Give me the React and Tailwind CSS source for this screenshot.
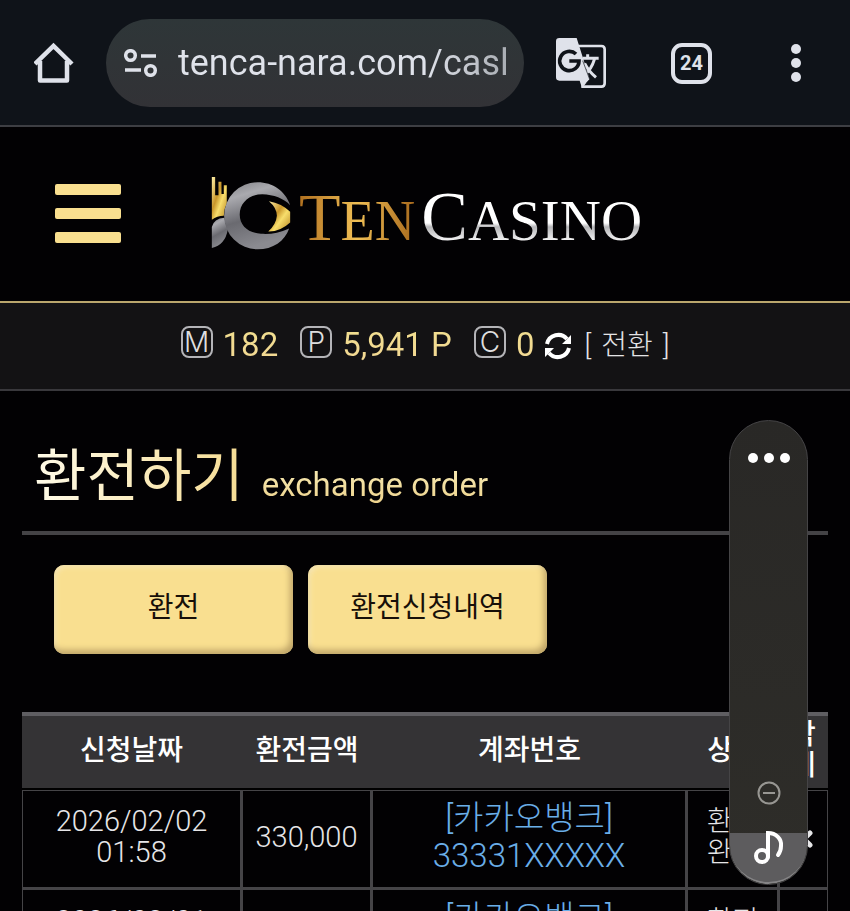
import React from 'react';

const BALANCES = [
  { key: 'M', value: '182' },
  { key: 'P', value: '5,941 P' },
  { key: 'C', value: '0' },
];

const ORDERS = [
  { date: '2026/02/02', time: '01:58', amount: '330,000', bank: '[카카오뱅크]', account: '33331XXXXX', status: ['환전', '완료'] },
  { date: '2026/02/01', time: '01:58', amount: '330,000', bank: '[카카오뱅크]', account: '33331XXXXX', status: ['환전', '완료'] },
];

function HomeIcon() {
  return (
    <svg viewBox="0 0 40 42" className="h-[42px] w-10" fill="none" stroke="#dfe2ea" strokeWidth="4.500" strokeLinejoin="round">
      <path d="M1 22 L19.500 4 L38 22" strokeLinejoin="miter" />
      <path d="M6 19 V38.500 H33 V19" />
    </svg>
  );
}

function TuneIcon() {
  return (
    <svg viewBox="0 0 34 28" className="h-7 w-[34px] shrink-0" fill="none" stroke="#dfe2ea" strokeWidth="3.500">
      <circle cx="6.500" cy="6.500" r="4.800" />
      <path d="M17 7 H32 M1 21 H17" />
      <circle cx="26.500" cy="21.500" r="4.800" />
    </svg>
  );
}

function TranslateIcon() {
  return (
    <svg viewBox="0 0 150 150" className="h-[50px] w-[50px]" fill="none">
      <path d="M66 24 H136 Q146 24 146 34 V136 Q146 146 136 146 H76" stroke="#dfe2ea" strokeWidth="8" />
      <path d="M10 0 H62 L101 124 L78 150 L71 128 H10 Q0 128 0 118 V10 Q0 0 10 0Z" fill="#dfe2ea" />
      <path d="M60 48 A29 29 0 1 0 69 69 H40" stroke="#0f1319" strokeWidth="11" />
      <path d="M80 61 H128 M95 49 V61 M116 62 Q106 96 84 112 M86 76 Q98 100 120 118" stroke="#dfe2ea" strokeWidth="9" />
      <path d="M80 68 L101 124 L90 136" stroke="#0f1319" strokeWidth="2" />
    </svg>
  );
}

function LogoMark() {
  return (
    <svg viewBox="66 50 240 226" className="h-[75px] w-20" aria-hidden="true">
      <defs>
        <linearGradient id="markGold" x1="0" y1="0" x2="1" y2="1">
          <stop offset="0" stopColor="#fff0a8" />
          <stop offset="0.4" stopColor="#c9962a" />
          <stop offset="0.6" stopColor="#f8de6c" />
          <stop offset="1" stopColor="#b58420" />
        </linearGradient>
        <linearGradient id="markSteel" x1="0" y1="0" x2="0.3" y2="1">
          <stop offset="0" stopColor="#7f7f84" />
          <stop offset="0.25" stopColor="#aaaaaf" />
          <stop offset="0.6" stopColor="#6a6a70" />
          <stop offset="1" stopColor="#8a8a90" />
        </linearGradient>
      </defs>
      <path d="M68 53 H78 V108 H88 V67 H97 V104 H104 V78 H113 V132 Q104 150 104 170 Q84 170 68 182Z" fill="url(#markGold)" />
      <path d="M68 204 Q74 178 106 176 Q107 192 116 212 Q108 258 68 267Z" fill="url(#markSteel)" />
      <path
        d="M304 138 C290 96 252 69 206 69 A101 101 0 1 0 206 271 C252 271 288 246 301 208 C270 222 244 226 216 224 C178 222 152 200 152 166 C152 130 182 105 220 105 C254 106 286 118 304 138Z"
        fill="url(#markSteel)"
      />
      <path d="M240 126 Q278 132 304 158 V190 Q274 218 238 217 Q262 196 264 170 Q264 146 240 126Z" fill="url(#markGold)" />
    </svg>
  );
}

function BrowserBar() {
  return (
    <div className="flex items-center border-b-2 border-[#3d3e43] bg-[#0f1319] pt-[19px] pr-[49px] pb-[18px] pl-[34px]">
      <button type="button" aria-label="Home" className="mr-8">
        <HomeIcon />
      </button>
      <div className="flex h-[88px] min-w-0 flex-1 items-center gap-5 rounded-full bg-linear-to-b from-[#2e3638] to-[#323236] pr-4 pl-[18px]">
        <TuneIcon />
        <label className="min-w-0 flex-1 overflow-hidden">
          <input
            type="text"
            aria-label="Address"
            defaultValue="tenca-nara.com/casl"
            className="w-full bg-linear-to-r from-[#dfe2ea] from-75% to-[#a9adb3] bg-clip-text text-[36px] leading-[48px] text-transparent outline-none"
          />
        </label>
      </div>
      <button type="button" aria-label="Translate" className="ml-8">
        <TranslateIcon />
      </button>
      <button
        type="button"
        aria-label="Tabs"
        className="ml-[65px] flex h-[41px] w-[41px] items-center justify-center rounded-[11px] border-4 border-[#dfe2ea] text-xl font-bold text-[#dfe2ea]"
      >
        24
      </button>
      <button type="button" aria-label="Menu" className="ml-[79px] flex flex-col gap-1">
        <span className="h-[10px] w-[10px] rounded-full bg-[#dfe2ea]" />
        <span className="h-[10px] w-[10px] rounded-full bg-[#dfe2ea]" />
        <span className="h-[10px] w-[10px] rounded-full bg-[#dfe2ea]" />
      </button>
    </div>
  );
}

function SiteHeader() {
  return (
    <header className="flex h-[176px] items-center gap-[90px] border-b-2 border-[#b9a66c] pb-[2px] pl-[55px]">
      <button type="button" aria-label="메뉴" className="flex w-[66px] flex-col gap-[13px]">
        <span className="h-[11px] w-full rounded-xs bg-[#f9df8f]" />
        <span className="h-[11px] w-full rounded-xs bg-[#f9df8f]" />
        <span className="h-[11px] w-full rounded-xs bg-[#f9df8f]" />
      </button>
      <a href="#" className="flex items-center gap-2 whitespace-nowrap font-['Liberation_Serif',serif] text-[56px] leading-[76px]">
        <LogoMark />
        <span className="flex items-baseline gap-[6px] pt-3">
          <span className="bg-linear-to-r from-[#b0701f] via-[#f0bf55] to-[#a86a1c] bg-clip-text text-transparent">
            <span className="text-[68px]">T</span>EN
          </span>
          <span className="bg-linear-to-b from-white from-55% via-[#b5b5b8] via-60% to-white to-80% bg-clip-text text-[57px] text-transparent">
            <span className="text-[70px]">C</span>ASINO
          </span>
        </span>
      </a>
    </header>
  );
}

function BalanceBar() {
  return (
    <div className="flex h-[88px] items-center justify-center border-b-2 border-[#39383c] bg-[#131214] pb-2 whitespace-nowrap">
      {BALANCES.map((b) => (
        <div key={b.key} className="mr-[22px] flex items-center gap-[10px] last-of-type:mr-[10px]">
          <span className="flex h-8 w-8 items-center justify-center rounded-lg border-2 border-[#b4b4b8] font-['Inter',sans-serif] text-[28px] leading-none font-light text-[#dededf]">
            {b.key}
          </span>
          <span className="bg-linear-to-b from-[#f0e08e] to-[#f3d794] bg-clip-text pt-[6px] text-[33px] leading-10 text-transparent">{b.value}</span>
        </div>
      ))}
      <button type="button" className="flex items-center gap-3 pt-2 text-[28px] leading-10 font-light text-[#e4e4e6]">
        <svg viewBox="0 0 28 28" className="h-7 w-7" fill="none" stroke="#fff" strokeWidth="4">
          <path d="M3 12 A11.500 11.500 0 0 1 23 7 M25 16 A11.500 11.500 0 0 1 5 21" />
          <path d="M27 3 V12 H18Z M1 25 V16 H10Z" fill="#fff" stroke="none" />
        </svg>
        <span className="flex gap-[10px]">
          <span>[</span>
          <span>전환</span>
          <span>]</span>
        </span>
      </button>
    </div>
  );
}

function OrderTable() {
  return (
    <table className="w-full table-fixed border-separate border-spacing-0 text-center text-[29px] leading-[31px] text-[#e6e6e8]">
      <colgroup>
        <col className="w-[221px]" />
        <col className="w-[130px]" />
        <col />
        <col className="w-[92px]" />
        <col className="w-[48px]" />
      </colgroup>
      <thead>
        <tr className="h-[78px] text-[28px] text-white [&>th]:border-t-4 [&>th]:border-b-2 [&>th]:border-t-[#5f5e62] [&>th]:border-b-black [&>th]:bg-[#343335] [&>th]:pr-[2px] [&>th]:pb-1 [&>th]:font-medium">
          <th>신청날짜</th>
          <th>환전금액</th>
          <th>계좌번호</th>
          <th>상태</th>
          <th>삭<br />제</th>
        </tr>
      </thead>
      <tbody className="[&_td]:border-r-[3px] [&_td]:border-b-[3px] [&_td]:border-[#454447] [&_td]:pb-1 [&_td:first-child]:border-l [&_td:last-child]:border-r [&>tr:first-child>td]:border-t">
        {ORDERS.map((o, i) => (
          <tr key={i} className="h-[100px] font-light">
            <td>{o.date}<br />{o.time}</td>
            <td>{o.amount}</td>
            <td className="text-[33px] leading-[38px] text-[#6aaee8]">{o.bank}<br />{o.account}</td>
            <td className="text-[28px]">{o.status[0]}<br />{o.status[1]}</td>
            <td>
              <button type="button" aria-label="삭제" className="align-middle">
                <svg viewBox="0 0 18 18" className="h-[18px] w-[18px]" stroke="#e6e6e8" strokeWidth="5" strokeLinecap="round">
                  <path d="M3 3 L15 15 M15 3 L3 15" />
                </svg>
              </button>
            </td>
          </tr>
        ))}
      </tbody>
    </table>
  );
}

// system volume overlay, floats over the page
function VolumePanel() {
  return (
    <div className="absolute top-[420px] right-[42px] flex h-[465px] w-[79px] flex-col items-center overflow-hidden rounded-full border border-[#454446] bg-linear-to-b from-[#292826] to-[#2e2d29]">
      <button type="button" aria-label="More" className="mt-8 flex gap-[6px]">
        <span className="h-[10px] w-[10px] rounded-full bg-white" />
        <span className="h-[10px] w-[10px] rounded-full bg-white" />
        <span className="h-[10px] w-[10px] rounded-full bg-white" />
      </button>
      <svg viewBox="0 0 24 24" className="mt-auto mb-7 h-6 w-6" fill="none" stroke="#979692" strokeWidth="2">
        <circle cx="12" cy="12" r="10.500" />
        <path d="M6 12 H18" />
      </svg>
      <div className="flex h-[51px] w-full shrink-0 justify-center rounded-b-full border-b-2 border-[#858486] bg-[#5d5c5e]">
        <svg viewBox="0 0 30 36" className="-mt-1 h-9 w-[30px]" fill="none" stroke="#fff" strokeWidth="4">
          <circle cx="8" cy="27" r="6" />
          <path d="M14 28 V4 C22 4 28 10 27 17 Q27 22 24 26" strokeLinecap="round" />
        </svg>
      </div>
    </div>
  );
}

function App() {
  return (
    <div className="relative h-screen overflow-x-hidden overflow-y-hidden bg-[#020103] font-['Roboto','Noto_Sans_CJK_KR',sans-serif]">
      <BrowserBar />
      <SiteHeader />
      <BalanceBar />
      <main className="px-[22px]">
        <h1 className="flex h-[144px] items-baseline gap-[18px] border-b-4 border-[#444346] pt-[46px] pl-3">
          <span className="bg-linear-to-r from-[#fffbe8] to-[#f6dc92] bg-clip-text text-[57px] leading-[80px] text-transparent">환전하기</span>
          <small className="bg-linear-to-b from-[#f8eebb] to-[#eccf86] bg-clip-text text-[33px] leading-[48px] text-transparent">exchange order</small>
        </h1>
        <div className="flex gap-[15px] pt-[30px] pb-[58px] pl-8 text-[28px] text-[#170f08] [&>button]:h-[89px] [&>button]:w-[239px] [&>button]:rounded-[10px] [&>button]:bg-[#f9df90] [&>button]:pb-1 [&>button]:shadow-[inset_-3px_-4px_6px_#bfa568,inset_2px_2px_5px_#f7e8b8]">
          <button type="button">환전</button>
          <button type="button">환전신청내역</button>
        </div>
        <OrderTable />
      </main>
      <VolumePanel />
    </div>
  );
}

export default App;
